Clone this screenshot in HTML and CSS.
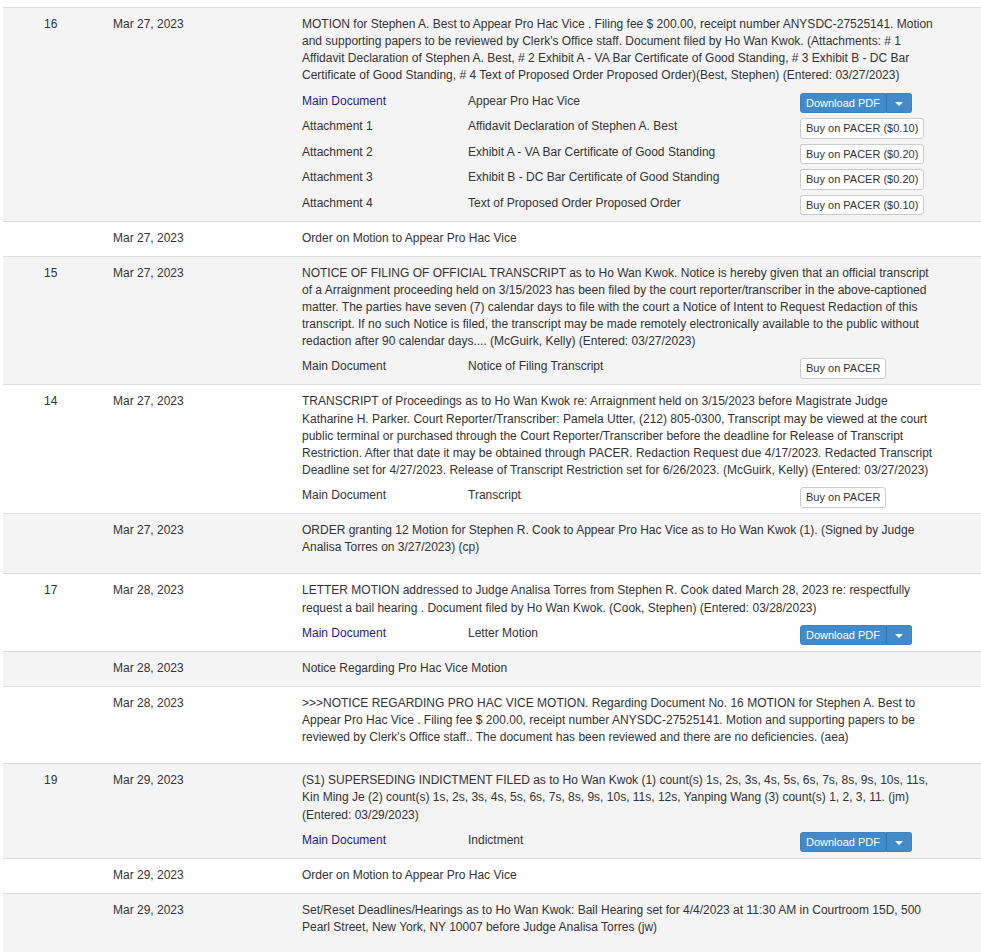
FILE: index.html
```html
<!DOCTYPE html>
<html lang="en">
<head>
    <meta charset="UTF-8">
    <title>Docket Entries</title>
    <link rel="stylesheet" href="styles.css">
</head>
<body>
    <table class="docket">
        <colgroup>
            <col class="col-num">
            <col class="col-date">
            <col>
        </colgroup>
        <tbody>
            <tr>
                <td class="num">16</td>
                <td class="date">Mar 27, 2023</td>
                <td class="desc">
                    <p>MOTION for Stephen A. Best to Appear Pro Hac Vice . Filing fee $ 200.00, receipt number ANYSDC-27525141. Motion and supporting papers to be reviewed by Clerk's Office staff. Document filed by Ho Wan Kwok. (Attachments: # 1 Affidavit Declaration of Stephen A. Best, # 2 Exhibit A - VA Bar Certificate of Good Standing, # 3 Exhibit B - DC Bar Certificate of Good Standing, # 4 Text of Proposed Order Proposed Order)(Best, Stephen) (Entered:&nbsp;03/27/2023)</p>
                    <div class="docs">
                        <div class="doc-row">
                            <a class="doc-name" href="#">Main Document</a>
                            <span class="doc-title">Appear Pro Hac Vice</span>
                            <div class="btn-group">
                                <button class="btn btn-primary">Download PDF</button><button class="btn btn-primary caret-btn"><span class="caret"></span></button>
                            </div>
                        </div>
                        <div class="doc-row">
                            <span class="doc-name">Attachment 1</span>
                            <span class="doc-title">Affidavit Declaration of Stephen A. Best</span>
                            <div><button class="btn btn-default">Buy on PACER ($0.10)</button></div>
                        </div>
                        <div class="doc-row">
                            <span class="doc-name">Attachment 2</span>
                            <span class="doc-title">Exhibit A - VA Bar Certificate of Good Standing</span>
                            <div><button class="btn btn-default">Buy on PACER ($0.20)</button></div>
                        </div>
                        <div class="doc-row">
                            <span class="doc-name">Attachment 3</span>
                            <span class="doc-title">Exhibit B - DC Bar Certificate of Good Standing</span>
                            <div><button class="btn btn-default">Buy on PACER ($0.20)</button></div>
                        </div>
                        <div class="doc-row">
                            <span class="doc-name">Attachment 4</span>
                            <span class="doc-title">Text of Proposed Order Proposed Order</span>
                            <div><button class="btn btn-default">Buy on PACER ($0.10)</button></div>
                        </div>
                    </div>
                </td>
            </tr>
            <tr>
                <td class="num"></td>
                <td class="date">Mar 27, 2023</td>
                <td class="desc brief">Order on Motion to Appear Pro Hac Vice</td>
            </tr>
            <tr>
                <td class="num">15</td>
                <td class="date">Mar 27, 2023</td>
                <td class="desc">
                    <p>NOTICE OF FILING OF OFFICIAL TRANSCRIPT as to Ho Wan Kwok. Notice is hereby given that an official transcript of a Arraignment proceeding held on 3/15/2023 has been filed by the court reporter/transcriber in the above-captioned matter. The parties have seven (7) calendar days to file with the court a Notice of Intent to Request Redaction of this transcript. If no such Notice is filed, the transcript may be made remotely electronically available to the public without redaction after 90 calendar days.... (McGuirk, Kelly) (Entered:&nbsp;03/27/2023)</p>
                    <div class="docs">
                        <div class="doc-row">
                            <span class="doc-name">Main Document</span>
                            <span class="doc-title">Notice of Filing Transcript</span>
                            <div><button class="btn btn-default">Buy on PACER</button></div>
                        </div>
                    </div>
                </td>
            </tr>
            <tr>
                <td class="num">14</td>
                <td class="date">Mar 27, 2023</td>
                <td class="desc">
                    <p>TRANSCRIPT of Proceedings as to Ho Wan Kwok re: Arraignment held on 3/15/2023 before Magistrate Judge Katharine H. Parker. Court Reporter/Transcriber: Pamela Utter, (212) 805-0300, Transcript may be viewed at the court public terminal or purchased through the Court Reporter/Transcriber before the deadline for Release of Transcript Restriction. After that date it may be obtained through PACER. Redaction Request due 4/17/2023. Redacted Transcript Deadline set for 4/27/2023. Release of Transcript Restriction set for 6/26/2023. (McGuirk, Kelly) (Entered:&nbsp;03/27/2023)</p>
                    <div class="docs">
                        <div class="doc-row">
                            <span class="doc-name">Main Document</span>
                            <span class="doc-title">Transcript</span>
                            <div><button class="btn btn-default">Buy on PACER</button></div>
                        </div>
                    </div>
                </td>
            </tr>
            <tr>
                <td class="num"></td>
                <td class="date">Mar 27, 2023</td>
                <td class="desc">
                    <p>ORDER granting 12 Motion for Stephen R. Cook to Appear Pro Hac Vice as to Ho Wan Kwok (1). (Signed by Judge Analisa Torres on 3/27/2023) (cp)</p>
                </td>
            </tr>
            <tr>
                <td class="num">17</td>
                <td class="date">Mar 28, 2023</td>
                <td class="desc">
                    <p>LETTER MOTION addressed to Judge Analisa Torres from Stephen R. Cook dated March 28, 2023 re: respectfully request a bail hearing . Document filed by Ho Wan Kwok. (Cook, Stephen) (Entered:&nbsp;03/28/2023)</p>
                    <div class="docs">
                        <div class="doc-row">
                            <a class="doc-name" href="#">Main Document</a>
                            <span class="doc-title">Letter Motion</span>
                            <div class="btn-group">
                                <button class="btn btn-primary">Download PDF</button><button class="btn btn-primary caret-btn"><span class="caret"></span></button>
                            </div>
                        </div>
                    </div>
                </td>
            </tr>
            <tr>
                <td class="num"></td>
                <td class="date">Mar 28, 2023</td>
                <td class="desc brief">Notice Regarding Pro Hac Vice Motion</td>
            </tr>
            <tr>
                <td class="num"></td>
                <td class="date">Mar 28, 2023</td>
                <td class="desc">
                    <p>&gt;&gt;&gt;NOTICE REGARDING PRO HAC VICE MOTION. Regarding Document No. 16 MOTION for Stephen A. Best to Appear Pro Hac Vice . Filing fee $ 200.00, receipt number ANYSDC-27525141. Motion and supporting papers to be reviewed by Clerk's Office staff.. The document has been reviewed and there are no deficiencies. (aea)</p>
                </td>
            </tr>
            <tr>
                <td class="num">19</td>
                <td class="date">Mar 29, 2023</td>
                <td class="desc">
                    <p>(S1) SUPERSEDING INDICTMENT FILED as to Ho Wan Kwok (1) count(s) 1s, 2s, 3s, 4s, 5s, 6s, 7s, 8s, 9s, 10s, 11s, Kin Ming Je (2) count(s) 1s, 2s, 3s, 4s, 5s, 6s, 7s, 8s, 9s, 10s, 11s, 12s, Yanping Wang (3) count(s) 1, 2, 3, 11. (jm) (Entered:&nbsp;03/29/2023)</p>
                    <div class="docs">
                        <div class="doc-row">
                            <a class="doc-name" href="#">Main Document</a>
                            <span class="doc-title">Indictment</span>
                            <div class="btn-group">
                                <button class="btn btn-primary">Download PDF</button><button class="btn btn-primary caret-btn"><span class="caret"></span></button>
                            </div>
                        </div>
                    </div>
                </td>
            </tr>
            <tr>
                <td class="num"></td>
                <td class="date">Mar 29, 2023</td>
                <td class="desc brief">Order on Motion to Appear Pro Hac Vice</td>
            </tr>
            <tr>
                <td class="num"></td>
                <td class="date">Mar 29, 2023</td>
                <td class="desc">
                    <p>Set/Reset Deadlines/Hearings as to Ho Wan Kwok: Bail Hearing set for 4/4/2023 at 11:30 AM in Courtroom 15D, 500 Pearl Street, New York, NY 10007 before Judge Analisa Torres (jw)</p>
                </td>
            </tr>
        </tbody>
    </table>
</body>
</html>
```

FILE: styles.css
```css
body {
    margin: 0;
    padding: 7px 0 0 3px;
    font-family: "Liberation Sans", Arial, sans-serif;
    font-size: 12px;
    line-height: 1.42857;
    color: #333;
    background-color: #fff;
}

.docket {
    width: 100%;
    border-collapse: collapse;
    table-layout: fixed;
}

.col-num {
    width: 102px;
}

.col-date {
    width: 189px;
}

.docket td {
    vertical-align: top;
    border-top: 1px solid #ddd;
    padding: 8px 8px 7px;
}

/* zebra rows */
.docket tbody tr:nth-child(odd) {
    background-color: #f4f4f4;
}

.docket td.num {
    padding-left: 41px;
}

.docket td.desc {
    padding-right: 44px;
}

/* one-line entries with no paragraph */
.docket td.brief {
    padding-bottom: 9px;
}

.desc p {
    margin: 0 0 10px;
}

.docs {
    display: flex;
    flex-direction: column;
    gap: 5px;
    margin: -2px 0 -1.5px;
}

.doc-row {
    display: grid;
    grid-template-columns: 166px 332px auto;
    align-items: start;
}

.doc-name {
    color: #333;
    text-decoration: none;
}

a.doc-name {
    color: #1f1b8e;
}

.btn {
    display: inline-block;
    font-family: inherit;
    font-size: 11px;
    line-height: 1.5;
    padding: 1px 5px;
    border: 1px solid transparent;
    border-radius: 3px;
    cursor: pointer;
    vertical-align: top;
}

.btn-default {
    color: #333;
    background-color: #fff;
    border-color: #ccc;
}

.btn-primary {
    color: #fff;
    background-color: #428bca;
    border-color: #3c82bf;
}

.btn-group {
    display: inline-flex;
}

.btn-group .btn:first-child {
    border-top-right-radius: 0;
    border-bottom-right-radius: 0;
}

.btn-group .caret-btn {
    border-top-left-radius: 0;
    border-bottom-left-radius: 0;
    border-left-color: #3276b1;
    padding-left: 8px;
    padding-right: 8px;
}

.caret {
    display: inline-block;
    width: 0;
    height: 0;
    vertical-align: middle;
    border-top: 4px solid #fff;
    border-left: 4px solid transparent;
    border-right: 4px solid transparent;
}
```
